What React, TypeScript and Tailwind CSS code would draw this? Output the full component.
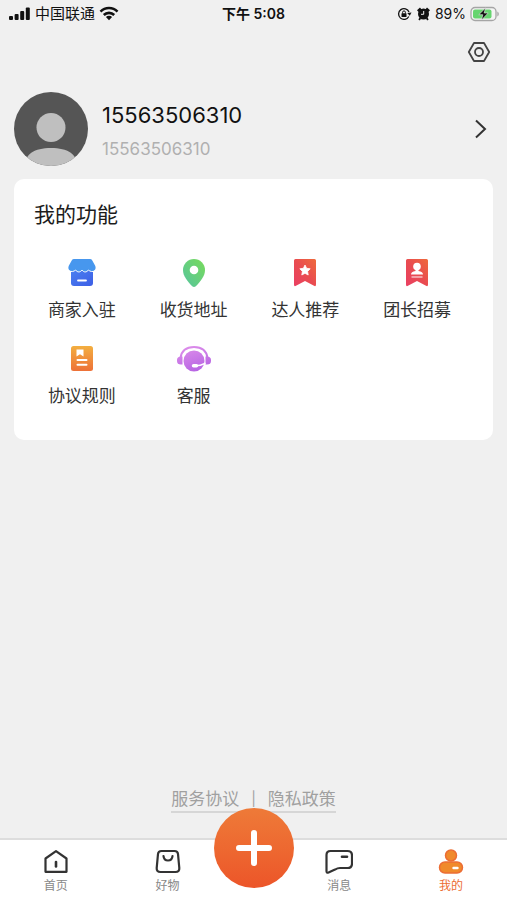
import type { ReactNode } from 'react'

const font = "font-['Inter','Noto_Sans_CJK_SC',sans-serif]"

function StatusBar() {
  return (
    <div className="grid h-7 grid-cols-[1fr_auto_1fr] items-center px-2 text-sm text-[#111111]">
      <div className="flex items-center gap-1">
        <svg width="23" height="14" viewBox="0 0 23 14" fill="currentColor" aria-hidden="true">
          <rect x="1" y="9" width="4" height="4" rx="1" />
          <rect x="6.600" y="7" width="4" height="6" rx="1" />
          <rect x="12.200" y="4" width="4" height="9" rx="1" />
          <rect x="17.800" y="0.500" width="4" height="12.500" rx="1" />
        </svg>
        <span className="text-[15px]">中国联通</span>
        <svg width="20" height="15" viewBox="0 0 20 15" fill="none" stroke="currentColor" strokeWidth="2.600" aria-hidden="true">
          <path d="M1.500 5.600a12 12 0 0 1 17 0" />
          <path d="M4.800 9a7.400 7.400 0 0 1 10.400 0" />
          <path d="M10 14.200 6.900 11a4.400 4.400 0 0 1 6.200 0z" fill="currentColor" stroke="none" />
        </svg>
      </div>
      <div className="font-semibold">下午 5:08</div>
      <div className="flex items-center justify-end gap-1">
        <svg width="15" height="14" viewBox="0 0 15 14" fill="none" stroke="currentColor" aria-hidden="true">
          <path d="M11.800 9.500A5.400 5.400 0 1 1 12 5" strokeWidth="1.300" />
          <path d="m10.200 6 4.300-.4-1.700 3.200z" fill="currentColor" stroke="none" />
          <rect x="4.500" y="6.200" width="5" height="3.800" rx="0.500" fill="currentColor" stroke="none" />
          <path d="M5.600 6.500V5.300a1.400 1.400 0 0 1 2.800 0v1.200" />
        </svg>
        <svg width="15" height="14" viewBox="0 0 15 14" fill="none" stroke="currentColor" aria-hidden="true">
          <circle cx="7.500" cy="7" r="5.500" fill="currentColor" stroke="none" />
          <path d="M1.800 4.200 4.800 1.500M13.200 4.200l-3-2.700" strokeWidth="2.400" />
          <path d="m4.300 11-1.200 2M10.700 11l1.200 2" strokeWidth="1.800" />
          <path d="M7.700 4v3.300H5" stroke="#f0f0f0" />
        </svg>
        <span>89%</span>
        <svg width="29" height="16" viewBox="0 0 29 16" aria-hidden="true">
          <rect x="1" y="1.500" width="25" height="13" rx="4" fill="#f4f4f4" stroke="#a5a5a5" strokeWidth="1.300" />
          <rect x="3" y="3.500" width="18.500" height="9" rx="2" fill="#66d56f" />
          <path d="M27.300 5.500c2 .8 2 4.200 0 5z" fill="#a5a5a5" />
          <path d="M15.500 2 8.800 8.700h4L11.500 14l6.700-7h-4z" fill="#111111" stroke="#f0f0f0" strokeWidth="0.600" />
        </svg>
      </div>
    </div>
  )
}

function Profile() {
  return (
    <section className="flex items-center px-3.5">
      <svg className="shrink-0" width="74" height="74" viewBox="0 0 74 74" aria-hidden="true">
        <defs>
          <clipPath id="avatar">
            <circle cx="37" cy="37" r="37" />
          </clipPath>
        </defs>
        <g clipPath="url(#avatar)">
          <rect width="74" height="74" fill="#555555" />
          <circle cx="37" cy="35.500" r="14.500" fill="#bfbfbf" />
          <path d="M11 74c0-12 9-18 26-18s26 6 26 18z" fill="#bfbfbf" />
        </g>
      </svg>
      <div className="ml-3.5 flex-1 pt-1">
        <h1 className="text-[22px] leading-8 text-[#111111]">15563506310</h1>
        <p className="mt-1 text-[17px] leading-7 text-[#b0b0b0]">15563506310</p>
      </div>
      <button type="button" aria-label="个人资料" className="px-1.5">
        <svg width="14" height="22" viewBox="0 0 14 22" fill="none" stroke="#333333" strokeWidth="2" aria-hidden="true">
          <path d="m3 2.500 9 8.500-9 8.500" />
        </svg>
      </button>
    </section>
  )
}

function RedRibbon({ id, children }: { id: string; children: ReactNode }) {
  return (
    <>
      <defs>
        <linearGradient id={id} x1="0" y1="1" x2="1" y2="0">
          <stop offset="0" stopColor="#ea3f63" />
          <stop offset="0.500" stopColor="#e94c50" />
          <stop offset="1" stopColor="#ef6a3b" />
        </linearGradient>
      </defs>
      <path d="M8.500 1h19Q29 1 29 2.500v24q0 2.400-2 1.300L18 23l-9 4.800q-2 1.100-2-1.300v-24Q7 1 8.500 1z" fill={`url(#${id})`} />
      {children}
    </>
  )
}

const features = [
  {
    label: '商家入驻',
    icon: (
      <>
        <defs>
          <linearGradient id="shop" x1="0" y1="0" x2="1" y2="1">
            <stop offset="0" stopColor="#4a80f0" />
            <stop offset="1" stopColor="#3d5ee6" />
          </linearGradient>
        </defs>
        <path d="M7 12h22v13q0 3-3 3H10q-3 0-3-3z" fill="url(#shop)" />
        <path
          d="M10 1h16q1.500 0 2.300 1.400l2.900 5.300c2 5-3.500 7.300-6.700 4.300-2 2.600-4.700 2.600-6.500 0-1.800 2.600-4.500 2.600-6.500 0-3.200 3-8.700.7-6.700-4.300l2.900-5.300Q8.500 1 10 1z"
          fill="#4797ee"
        />
        <path d="M5 12.800c2.500 1.300 5 .8 6.500-.8 2 2.600 4.700 2.600 6.500 0 1.800 2.600 4.500 2.600 6.500 0 1.500 1.600 4 2.100 6.500.8" fill="none" stroke="#ffffff" strokeWidth="1" />
        <path d="M14 22.500h8" stroke="#ffffff" strokeWidth="1.800" strokeLinecap="round" />
      </>
    ),
  },
  {
    label: '收货地址',
    icon: (
      <>
        <defs>
          <linearGradient id="pin" x1="1" y1="0" x2="0" y2="1">
            <stop offset="0" stopColor="#78db59" />
            <stop offset="1" stopColor="#55c4a0" />
          </linearGradient>
        </defs>
        <path d="M18 1a11 11 0 0 1 11 11c0 6-4.500 11.500-9.200 16.200q-1.800 1.600-3.600 0C11.500 23.500 7 18 7 12A11 11 0 0 1 18 1z" fill="url(#pin)" />
        <circle cx="18" cy="12" r="4.300" fill="#ffffff" />
      </>
    ),
  },
  {
    label: '达人推荐',
    icon: (
      <RedRibbon id="star">
        <path d="m18 7 1.600 3.300 3.600.5-2.600 2.600.6 3.600-3.200-1.700-3.200 1.700.6-3.600-2.600-2.600 3.600-.5z" fill="#ffffff" stroke="#ffffff" strokeWidth="0.800" strokeLinejoin="round" />
      </RedRibbon>
    ),
  },
  {
    label: '团长招募',
    icon: (
      <RedRibbon id="leader">
        <circle cx="18" cy="8.500" r="3.800" fill="#ffffff" />
        <path d="M16.500 11h3v2c3 .5 4.500 1.500 4.500 3.500H12c0-2 1.500-3 4.500-3.500z" fill="#ffffff" />
        <path d="M12.500 19h11" stroke="#ffffff" strokeOpacity="0.750" strokeWidth="1.300" />
      </RedRibbon>
    ),
  },
  {
    label: '协议规则',
    icon: (
      <>
        <defs>
          <linearGradient id="rules" x1="0" y1="0" x2="0" y2="1">
            <stop offset="0" stopColor="#f3af40" />
            <stop offset="1" stopColor="#ed7138" />
          </linearGradient>
        </defs>
        <rect x="7" y="2" width="22" height="25" rx="2.500" fill="url(#rules)" />
        <path d="M12.500 5.500h7v7L16 10.200l-3.500 2.300z" fill="#ffffff" />
        <path d="M13.500 16h9M13.500 20.700h9" stroke="#ffffff" strokeWidth="2" strokeLinecap="round" />
      </>
    ),
  },
  {
    label: '客服',
    icon: (
      <>
        <defs>
          <linearGradient id="service" gradientUnits="userSpaceOnUse" x1="14" y1="2" x2="22" y2="28">
            <stop offset="0" stopColor="#dc8cea" />
            <stop offset="1" stopColor="#b563e3" />
          </linearGradient>
        </defs>
        <circle cx="18" cy="17" r="10.500" fill="url(#service)" />
        <path d="M4.500 14C5.500 6.500 11 3 18 3s12.500 3.500 13.500 11" fill="none" stroke="url(#service)" strokeWidth="2" />
        <path d="M6.500 12.500v8H5Q1 20.500 1 17v-1q0-3.500 4-3.500zM29.500 12.500v8H31q4 0 4-3.500v-1q0-3.500-4-3.500z" fill="url(#service)" />
        <path d="M18 21.800q5 .5 11.500-2.600" fill="none" stroke="#ffffff" strokeWidth="1.500" />
        <path d="M17.500 21.800h3" stroke="#ffffff" strokeWidth="3.400" strokeLinecap="round" />
      </>
    ),
  },
]

function FeatureCard() {
  return (
    <section className="mx-3.5 mt-[13px] rounded-[10px] bg-white pb-8 pl-3 pr-5 pt-[22px]">
      <h2 className="pl-2 text-[21px] leading-7 text-[#1c1c1c]">我的功能</h2>
      <div className="mt-[29px] grid grid-cols-4 gap-y-[22px]">
        {features.map((f) => (
          <button key={f.label} type="button" className="flex flex-col items-center gap-2.5 text-[17px] leading-6 text-[#333333]">
            <svg width="36" height="30" viewBox="0 0 36 30" aria-hidden="true">
              {f.icon}
            </svg>
            {f.label}
          </button>
        ))}
      </div>
    </section>
  )
}

const tabs = [
  {
    label: '首页',
    icon: (
      <>
        <path d="M3.500 10.500 14 3.200l10.500 7.300v13.300h-21z" />
        <path d="M14 14v4.500" strokeWidth="2.600" />
      </>
    ),
  },
  {
    label: '好物',
    icon: (
      <>
        <path d="M7.500 3h13q3.200 0 3.500 3l1.300 14q.3 4-3.800 4h-15q-4.100 0-3.800-4L4 6q.3-3 3.500-3z" />
        <path d="M9.500 8c.5 6 8.500 6 9 0" />
      </>
    ),
  },
  {
    label: '消息',
    icon: (
      <>
        <path d="M5.500 3h17q4.500 0 4.500 4.500v8q0 4.500-4.500 4.500h-7.500q-2.500 0-5 1.600L3.500 24.500q-2 .8-2-1.200V7q0-4 4-4z" />
        <path d="M17 8.800h5" strokeWidth="2.600" />
      </>
    ),
  },
  {
    label: '我的',
    icon: (
      <>
        <circle cx="14" cy="7.500" r="5.500" fill="#f08a2c" stroke="#ec6d34" strokeWidth="1.500" />
        <rect x="2.500" y="14" width="23" height="11" rx="5.500" fill="#f08a2c" stroke="#ec6d34" strokeWidth="1.500" />
        <path d="M16.500 20h4" stroke="#ffffff" strokeWidth="2.400" />
      </>
    ),
  },
]

function Tab({ label, icon }: { label: string; icon: ReactNode }) {
  const active = label === '我的'
  return (
    <a href="#" className={`flex flex-col items-center pt-2 text-xs leading-5 ${active ? 'text-[#ec6d34]' : 'text-[#888888]'}`}>
      <svg width="28" height="28" viewBox="0 0 28 28" fill="none" stroke="#333333" strokeWidth="2.200" strokeLinecap="round" strokeLinejoin="round" aria-hidden="true">
        {icon}
      </svg>
      {label}
    </a>
  )
}

function TabBar() {
  return (
    <nav className="relative grid h-[62px] grid-cols-[1fr_1fr_60px_1fr_1fr] border-t-2 border-[#dddddd] bg-white">
      {tabs.slice(0, 2).map((t) => (
        <Tab key={t.label} {...t} />
      ))}
      <div />
      {tabs.slice(2).map((t) => (
        <Tab key={t.label} {...t} />
      ))}
      <button
        type="button"
        aria-label="发布"
        className="absolute -top-8 left-1/2 flex size-20 -translate-x-1/2 items-center justify-center rounded-full bg-linear-to-b from-[#ee7a38] to-[#ec5529]"
      >
        <svg width="36" height="36" viewBox="0 0 36 36" stroke="#ffffff" strokeWidth="6" strokeLinecap="round" aria-hidden="true">
          <path d="M18 3v30M3 18h30" />
        </svg>
      </button>
    </nav>
  )
}

export default function App() {
  return (
    <main className={`flex min-h-screen flex-col bg-[#f0f0f0] ${font}`}>
      <StatusBar />
      <div className="mb-7 flex justify-end pr-4 pt-3">
        <button type="button" aria-label="设置">
          <svg width="24" height="24" viewBox="0 0 24 24" fill="none" stroke="#444444" strokeWidth="1.800" strokeLinejoin="round" aria-hidden="true">
            <path d="M7 3h10l5.200 9L17 21H7l-5.200-9z" />
            <circle cx="12" cy="12" r="4" />
          </svg>
        </button>
      </div>
      <Profile />
      <FeatureCard />
      <div className="mb-[25px] mt-auto flex justify-center">
        <div className="flex border-b-2 border-[#d6d6d6] text-[17px] leading-6 text-[#a0a0a0]">
          <a href="#">服务协议</a>
          <span className="px-3 text-sm leading-6">|</span>
          <a href="#">隐私政策</a>
        </div>
      </div>
      <TabBar />
    </main>
  )
}
